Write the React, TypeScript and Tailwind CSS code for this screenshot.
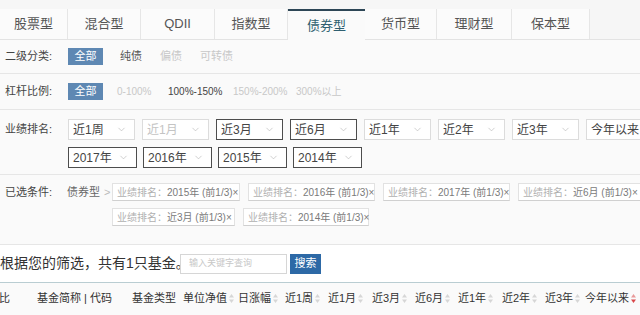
import { ChevronDown } from "lucide-react";

const tabs = [
  { label: "股票型", w: "w-[68px]" },
  { label: "混合型", w: "w-[73px]" },
  { label: "QDII", w: "w-[74px]" },
  { label: "指数型", w: "w-[73px]" },
  { label: "债券型", w: "w-[77px]", active: true },
  { label: "货币型", w: "w-[72px]" },
  { label: "理财型", w: "w-[75px]" },
  { label: "保本型", w: "w-[78px]" },
];

const rankRow1 = [
  { label: "近1周" },
  { label: "近1月", muted: true },
  { label: "近3月", on: true },
  { label: "近6月", on: true },
  { label: "近1年" },
  { label: "近2年" },
  { label: "近3年" },
  { label: "今年以来" },
];

const rankRow2 = ["2017年", "2016年", "2015年", "2014年"];

const cols = [
  { label: "基金简称 | 代码", w: "w-[95px]" },
  { label: "基金类型", w: "w-[51px]" },
  { label: "单位净值", w: "w-[55px]", sort: true },
  { label: "日涨幅", w: "w-[47px]", sort: true },
  { label: "近1周", w: "w-[43px]", sort: true },
  { label: "近1月", w: "w-[44px]", sort: true },
  { label: "近3月", w: "w-[43px]", sort: true },
  { label: "近6月", w: "w-[43px]", sort: true },
  { label: "近1年", w: "w-[44px]", sort: true },
  { label: "近2年", w: "w-[43px]", sort: true },
  { label: "近3年", w: "w-[40px]", sort: true },
  { label: "今年以来", w: "w-[60px]", sort: true, active: true },
];

function SortIcon({ active }: { active?: boolean }) {
  return (
    <svg width="5" height="9" viewBox="0 0 5 9" className="ml-[2px] shrink-0">
      <path d="M2.5 0 L5 3.5 L0 3.5 Z" fill={active ? "#e89a9a" : "#d6d6d6"} />
      <path d="M2.5 9 L5 5.5 L0 5.5 Z" fill={active ? "#d9474a" : "#d6d6d6"} />
    </svg>
  );
}

function Select({ label, width, muted, on }: { label: string; width: string; muted?: boolean; on?: boolean }) {
  return (
    <div
      className={`flex h-[21px] ${width} shrink-0 items-center justify-between overflow-hidden whitespace-nowrap bg-white pl-[4px] pr-[7px] text-[12px] ${
        on ? "border border-[#4d4d4d]" : "border border-[#dcdcdc]"
      } ${muted ? "text-[#c4c4c4]" : "text-[#444]"}`}
    >
      <span>{label}</span>
      <ChevronDown size={11} strokeWidth={1.4} className="shrink-0 text-[#b5b5b5]" />
    </div>
  );
}

function Tag({ value, width }: { value: string; width: string }) {
  return (
    <div className={`flex h-[18px] ${width} shrink-0 items-center border border-[#e2e2e2] border-b-[#d0d0d0] bg-white pl-[4px] text-[10px] whitespace-nowrap`}>
      <span className="text-[#b0b0b0]">业绩排名：</span>
      <span className="text-[#7a7a7a]">{value} (前1/3)×</span>
    </div>
  );
}

export default function App() {
  return (
    <div className="h-[315px] w-[640px] overflow-hidden bg-[#fafafa] font-['Liberation_Sans','Noto_Sans_CJK_SC',sans-serif] text-[#333]">
      {/* fund type tabs */}
      <div className="flex h-[40px] items-end border-b border-[#e3e3e3] bg-[#f6f6f6]">
        {tabs.map((t) => (
          <div
            key={t.label}
            className={`flex h-[30px] ${t.w} shrink-0 items-center justify-center text-[13px] ${
              t.active
                ? "mb-[-1px] h-[31px] border-t-2 border-[#2d4656] bg-[#fafafa] text-[#2f5f70]"
                : "border-r border-[#e6e6e6] bg-[#fbfbfb] text-[#555]"
            }`}
          >
            {t.label}
          </div>
        ))}
      </div>

      {/* 二级分类 */}
      <div className="flex h-[34px] items-center border-b border-[#e6e6e6] text-[11px]">
        <div className="w-[68px] shrink-0 pl-[5px] text-[#444]">二级分类:</div>
        <div className="flex h-[17px] w-[35px] items-center justify-center bg-[#5e88b3] text-white">全部</div>
        <div className="ml-[17px] flex gap-[18px]">
          <span className="text-[#555]">纯债</span>
          <span className="text-[#c8c8c8]">偏债</span>
          <span className="text-[#c8c8c8]">可转债</span>
        </div>
      </div>

      {/* 杠杆比例 */}
      <div className="flex h-[36px] items-center whitespace-nowrap border-b border-[#e6e6e6] text-[11px]">
        <div className="w-[68px] shrink-0 pl-[5px] text-[#444]">杠杆比例:</div>
        <div className="flex h-[17px] w-[35px] items-center justify-center bg-[#5e88b3] text-white">全部</div>
        <span className="ml-[14px] w-[51px] shrink-0 text-[10px] text-[#c8c8c8]">0-100%</span>
        <span className="w-[65px] shrink-0 text-[10px] text-[#444]">100%-150%</span>
        <span className="w-[63px] shrink-0 text-[10px] text-[#c8c8c8]">150%-200%</span>
        <span className="text-[10px] text-[#c8c8c8]">300%以上</span>
      </div>

      {/* 业绩排名 */}
      <div className="flex h-[65px] border-b border-[#e6e6e6] pt-[9px]">
        <div className="flex h-[21px] w-[68px] shrink-0 items-center pl-[5px] text-[11px] text-[#444]">业绩排名:</div>
        <div className="flex flex-col gap-[7px]">
          <div className="flex gap-[7px]">
            {rankRow1.map((r) => (
              <Select key={r.label} label={r.label} width="w-[67px]" muted={r.muted} on={r.on} />
            ))}
          </div>
          <div className="flex gap-[6px]">
            {rankRow2.map((r) => (
              <Select key={r} label={r} width="w-[69px]" on />
            ))}
          </div>
        </div>
      </div>

      {/* 已选条件 */}
      <div className="flex h-[70px] border-b border-[#e6e6e6] pt-[8px]">
        <div className="flex h-[18px] w-[67px] shrink-0 items-center pl-[5px] text-[11px] text-[#444]">已选条件:</div>
        <div className="flex h-[18px] w-[45px] shrink-0 items-center text-[11px] text-[#666]">
          债券型<span className="ml-[4px] text-[#bbb]">&gt;</span>
        </div>
        <div className="flex flex-col gap-[7px]">
          <div className="flex gap-[8px]">
            <Tag value="2015年" width="w-[128px]" />
            <Tag value="2016年" width="w-[127px]" />
            <Tag value="2017年" width="w-[127px]" />
            <Tag value="近6月" width="w-[124px]" />
          </div>
          <div className="flex gap-[8px]">
            <Tag value="近3月" width="w-[123px]" />
            <Tag value="2014年" width="w-[126px]" />
          </div>
        </div>
      </div>

      {/* result + search */}
      <div className="flex h-[38px] items-center border-b border-[#b9cdd2] bg-white">
        <div className="w-[180px] shrink-0 whitespace-nowrap text-[14px] text-[#333]">根据您的筛选，共有1只基金。</div>
        <div className="flex h-[20px] w-[107px] items-center border border-[#d6d6d6] bg-white pl-[8px] text-[9px] text-[#c8c8c8]">
          输入关键字查询
        </div>
        <div className="ml-[3px] flex h-[20px] w-[31px] items-center justify-center bg-[#2d69a6] text-[11px] text-white">搜索</div>
      </div>

      {/* table header */}
      <div className="flex h-[31px] items-center whitespace-nowrap text-[11px] text-[#333]">
        <div className="ml-[-12px] w-[49px] shrink-0">对比</div>
        {cols.map((c) => (
          <div key={c.label} className={`flex ${c.w} shrink-0 items-center`}>
            <span>{c.label}</span>
            {c.sort && <SortIcon active={c.active} />}
          </div>
        ))}
      </div>
    </div>
  );
}
